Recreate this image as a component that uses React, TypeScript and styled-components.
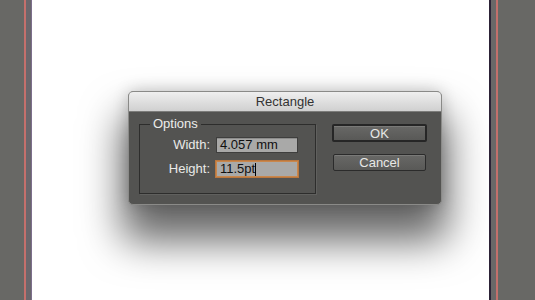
import React from "react";
import styled, { createGlobalStyle } from "styled-components";

const Global = createGlobalStyle`
  html, body { margin: 0; padding: 0; background: #ffffff; }
  body { font-family: "Liberation Sans", Arial, sans-serif; }
  * { box-sizing: border-box; }
`;

const Page = styled.div`
  display: flex;
  width: 535px;
  height: 300px;
  overflow: hidden;
`;

const Strip = styled.div<{ $w: number; $c: string }>`
  flex: 0 0 ${(p) => p.$w}px;
  background: ${(p) => p.$c};
`;

const Canvas = styled.div`
  flex: 1;
  background: #ffffff;
  padding: 91px 0 0 96px;
`;

const Dialog = styled.div`
  width: 314px;
  height: 114px;
  border-radius: 5px;
  background: #535351;
  border: 1px solid #8a8a88;
  box-shadow: 0 30px 40px 6px rgba(0, 0, 0, 0.6), 0 0 16px rgba(0, 0, 0, 0.2);
  display: flex;
  flex-direction: column;
  overflow: hidden;
`;

const TitleBar = styled.div`
  height: 20px;
  flex: 0 0 20px;
  background: linear-gradient(#efefef, #d0d0d0);
  border-bottom: 1px solid #7c7c7a;
  color: #333333;
  font-size: 13px;
  line-height: 20px;
  text-align: center;
`;

const Body = styled.div`
  display: flex;
  align-items: flex-start;
  padding: 5px 14px 0 10px;
  gap: 16px;
`;

const Group = styled.fieldset`
  width: 177px;
  margin: 0;
  padding: 6px 0 16px 0;
  border: 1px solid #2d2d2c;
  box-shadow: 1px 1px 0 rgba(255, 255, 255, 0.08);
`;

const Legend = styled.legend`
  margin-left: 10px;
  padding: 0 3px;
  color: #ececea;
  font-size: 13px;
  line-height: 14px;
`;

const Grid = styled.div`
  display: grid;
  grid-template-columns: 70px 82px;
  column-gap: 6px;
  row-gap: 8px;
  align-items: center;
`;

const Label = styled.label`
  text-align: right;
  color: #eaeae8;
  font-size: 13px;
  line-height: 16px;
`;

const Field = styled.div<{ $focused?: boolean }>`
  height: 16px;
  background: #a9a9a8;
  border: 1px solid ${(p) => (p.$focused ? "#c9874c" : "#3e3e3d")};
  box-shadow: ${(p) => (p.$focused ? "0 0 0 1px #b9773f" : "inset 0 1px 0 #8c8c8b")};
  color: #101010;
  font-size: 13px;
  line-height: 14px;
  padding-left: 3px;
  white-space: nowrap;
  display: flex;
  align-items: center;
`;

const Caret = styled.span`
  display: inline-block;
  width: 1px;
  height: 13px;
  background: #000;
`;

const Buttons = styled.div`
  display: flex;
  flex-direction: column;
  align-items: center;
  gap: 12px;
  padding-top: 7px;
  width: 95px;
`;

const Button = styled.div<{ $default?: boolean }>`
  width: ${(p) => (p.$default ? 95 : 93)}px;
  height: ${(p) => (p.$default ? 18 : 17)}px;
  border: ${(p) => (p.$default ? "2px solid #262626" : "1px solid #2b2b2b")};
  border-radius: 2px;
  background: linear-gradient(#686866, #595957);
  box-shadow: inset 0 1px 0 rgba(255, 255, 255, 0.12);
  color: #e8e8e6;
  font-size: 13px;
  display: flex;
  align-items: center;
  justify-content: center;
`;

export default function App() {
  return (
    <>
      <Global />
      <Page>
        <Strip $w={24} $c="#686865" />
        <Strip $w={2} $c="#c4706c" />
        <Strip $w={5} $c="#6a676c" />
        <Strip $w={1} $c="#7d6f8c" />
        <Canvas>
          <Dialog>
            <TitleBar>Rectangle</TitleBar>
            <Body>
              <Group>
                <Legend>Options</Legend>
                <Grid>
                  <Label>Width:</Label>
                  <Field>4.057 mm</Field>
                  <Label>Height:</Label>
                  <Field $focused>
                    11.5pt
                    <Caret />
                  </Field>
                </Grid>
              </Group>
              <Buttons>
                <Button $default>OK</Button>
                <Button>Cancel</Button>
              </Buttons>
            </Body>
          </Dialog>
        </Canvas>
        <Strip $w={2} $c="#2c2236" />
        <Strip $w={5} $c="#6a6868" />
        <Strip $w={2} $c="#c4706c" />
        <Strip $w={37} $c="#686865" />
      </Page>
    </>
  );
}
